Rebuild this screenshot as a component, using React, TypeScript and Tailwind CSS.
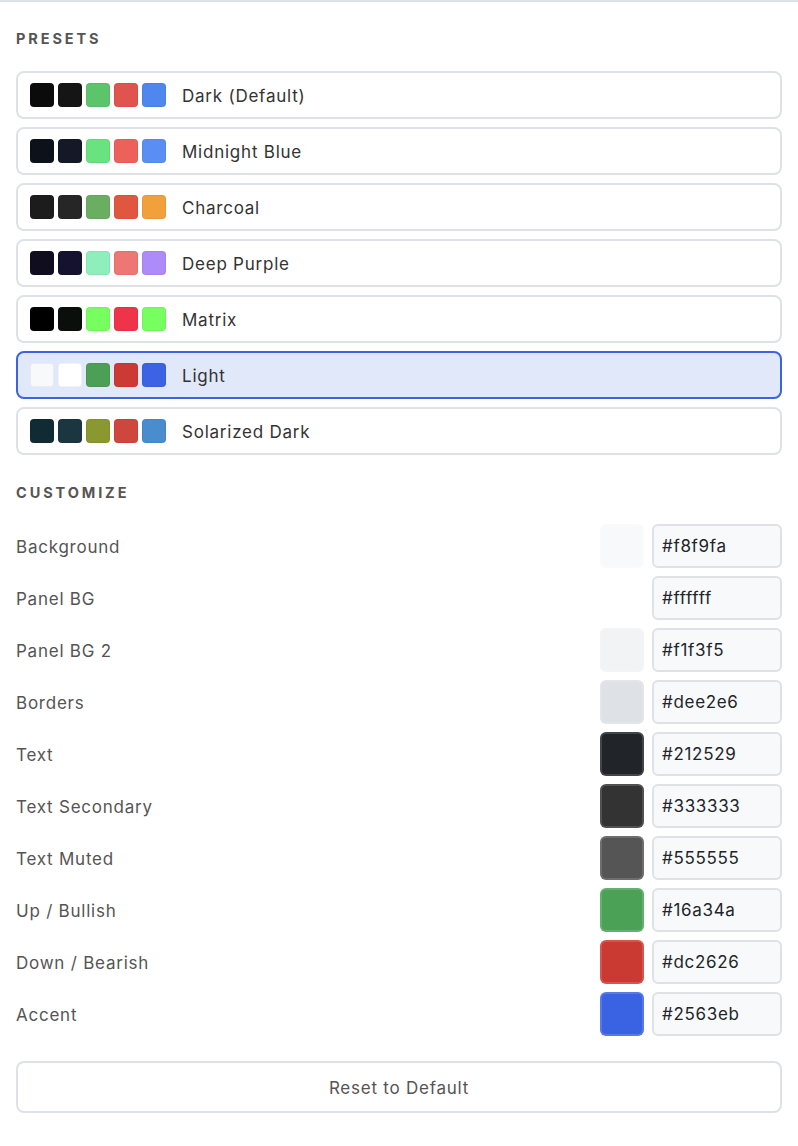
import { useState } from 'react';

type Preset = { name: string; colors: string[] };

const presets: Preset[] = [
  { name: 'Dark (Default)', colors: ['#0b0b0b', '#151515', '#5cc46a', '#e0534e', '#4f86ef'] },
  { name: 'Midnight Blue', colors: ['#0d111a', '#141827', '#69e37f', '#ee615b', '#5b8ef5'] },
  { name: 'Charcoal', colors: ['#1c1c1c', '#262626', '#6aaf61', '#e0563f', '#f2a03b'] },
  { name: 'Deep Purple', colors: ['#0f0d1e', '#14122e', '#8eefbc', '#ee7673', '#ad8bf8'] },
  { name: 'Matrix', colors: ['#000000', '#0b0f0b', '#77ff60', '#ef334a', '#77ff60'] },
  { name: 'Light', colors: ['#f8f9fa', '#ffffff', '#4c9f55', '#cb3a33', '#3b63e3'] },
  { name: 'Solarized Dark', colors: ['#112b35', '#1b3641', '#8a982f', '#cf463d', '#4a8dcf'] },
];

const fields = [
  { label: 'Background', value: '#f8f9fa', swatch: '#f8f9fa' },
  { label: 'Panel BG', value: '#ffffff', swatch: '#ffffff' },
  { label: 'Panel BG 2', value: '#f1f3f5', swatch: '#f1f3f5' },
  { label: 'Borders', value: '#dee2e6', swatch: '#dee2e6' },
  { label: 'Text', value: '#212529', swatch: '#212529' },
  { label: 'Text Secondary', value: '#333333', swatch: '#333333' },
  { label: 'Text Muted', value: '#555555', swatch: '#555555' },
  { label: 'Up / Bullish', value: '#16a34a', swatch: '#4ba156' },
  { label: 'Down / Bearish', value: '#dc2626', swatch: '#cb3a32' },
  { label: 'Accent', value: '#2563eb', swatch: '#3a63e3' },
];

export default function App() {
  const [selected, setSelected] = useState('Light');

  return (
    <div className="min-h-screen bg-white border-t-2 border-[#dee2e6] px-4 pt-[26px] font-['Inter','Noto_Sans',sans-serif]">
      <h3 className="h-5 pt-px leading-5 text-[14.5px] font-bold tracking-[0.2em] text-[#555555]">PRESETS</h3>
      <div className="mt-[23px] flex flex-col gap-2">
        {presets.map((p) => {
          const active = p.name === selected;
          return (
            <button
              key={p.name}
              onClick={() => setSelected(p.name)}
              className={
                active
                  ? 'flex h-12 items-center rounded-lg border-2 border-[#3b63e3] bg-[#e1e8fa] pl-3 text-left'
                  : 'flex h-12 items-center rounded-lg border-2 border-[#dee2e6] bg-white pl-3 text-left'
              }
            >
              <div className="flex gap-1">
                {p.colors.map((c, i) => (
                  <span
                    key={i}
                    className="block h-6 w-6 rounded-[4px] border border-black/5"
                    style={{ backgroundColor: c }}
                  />
                ))}
              </div>
              <span className="ml-4 pt-[3px] text-[17px] tracking-[0.045em] text-[#333333]">{p.name}</span>
            </button>
          );
        })}
      </div>

      <h3 className="mt-[27px] h-5 pt-px leading-5 text-[14.5px] font-bold tracking-[0.2em] text-[#555555]">CUSTOMIZE</h3>
      <div className="mt-[22px] flex flex-col gap-2">
        {fields.map((f) => (
          <div key={f.label} className="flex h-11 items-center">
            <span className="flex-1 pt-[3px] text-[17px] tracking-[0.045em] text-[#555555]">{f.label}</span>
            <span
              className="block h-11 w-11 rounded-md border-2 border-white/15"
              style={{ backgroundColor: f.swatch }}
            />
            <div className="ml-2 flex h-11 w-[130px] items-center rounded-md border-2 border-[#dee2e6] bg-[#f8f9fa] pl-2 pt-[2px] text-[17px] tracking-[0.04em] text-[#212529]">
              {f.value}
            </div>
          </div>
        ))}
      </div>

      <button className="mt-[25px] h-[52px] w-full rounded-lg border-2 border-[#dee2e6] bg-white pt-[3px] text-[17px] tracking-[0.045em] text-[#555555]">
        Reset to Default
      </button>
    </div>
  );
}
